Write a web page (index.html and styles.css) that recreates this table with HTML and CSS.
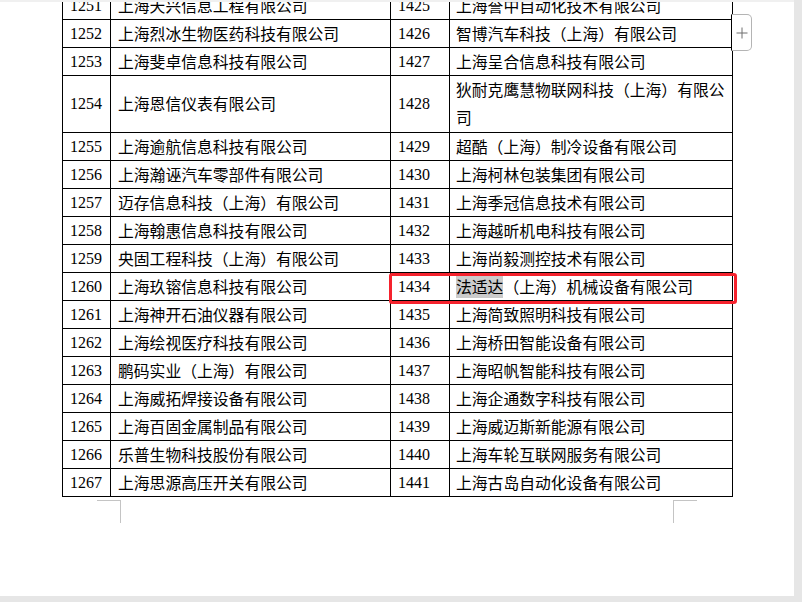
FILE: index.html
```html
<!DOCTYPE html>
<html lang="zh-CN">
<head>
<meta charset="utf-8">
<title>名单</title>
<link rel="stylesheet" href="styles.css">
</head>
<body>
<div class="shell">
  <div class="page">
    <div class="topstrip"></div>
    <div class="sheet">
      <table class="list">
        <colgroup><col class="c-num"><col class="c-name"><col class="c-num2"><col class="c-name2"></colgroup>
        <tr><td class="num">1251</td><td class="name">上海天兴信息工程有限公司</td><td class="num">1425</td><td class="name">上海誉中自动化技术有限公司</td></tr>
        <tr><td class="num">1252</td><td class="name">上海烈冰生物医药科技有限公司</td><td class="num">1426</td><td class="name">智博汽车科技（上海）有限公司</td></tr>
        <tr><td class="num">1253</td><td class="name">上海斐卓信息科技有限公司</td><td class="num">1427</td><td class="name">上海呈合信息科技有限公司</td></tr>
        <tr class="tall"><td class="num">1254</td><td class="name">上海恩信仪表有限公司</td><td class="num">1428</td><td class="name">狄耐克鹰慧物联网科技（上海）有限公司</td></tr>
        <tr><td class="num">1255</td><td class="name">上海逾航信息科技有限公司</td><td class="num">1429</td><td class="name">超酷（上海）制冷设备有限公司</td></tr>
        <tr><td class="num">1256</td><td class="name">上海瀚诬汽车零部件有限公司</td><td class="num">1430</td><td class="name">上海柯林包装集团有限公司</td></tr>
        <tr><td class="num">1257</td><td class="name">迈存信息科技（上海）有限公司</td><td class="num">1431</td><td class="name">上海季冠信息技术有限公司</td></tr>
        <tr><td class="num">1258</td><td class="name">上海翰惠信息科技有限公司</td><td class="num">1432</td><td class="name">上海越昕机电科技有限公司</td></tr>
        <tr><td class="num">1259</td><td class="name">央固工程科技（上海）有限公司</td><td class="num">1433</td><td class="name">上海尚毅测控技术有限公司</td></tr>
        <tr><td class="num">1260</td><td class="name">上海玖镕信息科技有限公司</td><td class="num">1434</td><td class="name"><span class="hl">法适达</span>（上海）机械设备有限公司</td></tr>
        <tr><td class="num">1261</td><td class="name">上海神开石油仪器有限公司</td><td class="num">1435</td><td class="name">上海简致照明科技有限公司</td></tr>
        <tr><td class="num">1262</td><td class="name">上海绘视医疗科技有限公司</td><td class="num">1436</td><td class="name">上海桥田智能设备有限公司</td></tr>
        <tr><td class="num">1263</td><td class="name">鹏码实业（上海）有限公司</td><td class="num">1437</td><td class="name">上海昭帆智能科技有限公司</td></tr>
        <tr><td class="num">1264</td><td class="name">上海威拓焊接设备有限公司</td><td class="num">1438</td><td class="name">上海企通数字科技有限公司</td></tr>
        <tr><td class="num">1265</td><td class="name">上海百固金属制品有限公司</td><td class="num">1439</td><td class="name">上海威迈斯新能源有限公司</td></tr>
        <tr><td class="num">1266</td><td class="name">乐普生物科技股份有限公司</td><td class="num">1440</td><td class="name">上海车轮互联网服务有限公司</td></tr>
        <tr><td class="num">1267</td><td class="name">上海思源高压开关有限公司</td><td class="num">1441</td><td class="name">上海古岛自动化设备有限公司</td></tr>
      </table>
      <div class="marks">
        <div class="mark mark-left"></div>
        <div class="mark mark-right"></div>
      </div>
    </div>
    <div class="redbox"></div>
    <div class="addbtn">
      <svg width="12" height="12" viewBox="0 0 12 12"><path d="M6 0.5V11.5M0.5 6H11.5" stroke="#6e6e6e" stroke-width="1" fill="none"/></svg>
    </div>
  </div>
  <div class="sidestrip"></div>
</div>
</body>
</html>
```

FILE: styles.css
```css
html, body {
  margin: 0;
  padding: 0;
  background: #e6e6e6;
  width: 802px;
  height: 602px;
  overflow: hidden;
}
.shell {
  display: flex;
  width: 802px;
  height: 602px;
}
.page {
  position: relative;
  width: 794px;
  height: 596px;
  background: #ffffff;
  overflow: hidden;
  flex: none;
}
.topstrip {
  height: 2px;
  background: #f0f0f0;
  position: relative;
  z-index: 2;
}
.sidestrip {
  flex: 1;
  background: #e6e6e6;
}
.sheet {
  padding-left: 62px;
  margin-top: -11px;
}
.list {
  border-collapse: collapse;
  table-layout: fixed;
  width: 670px;
  color: #000;
}
.c-num { width: 48px; }
.c-name { width: 280px; }
.c-num2 { width: 59px; }
.c-name2 { width: 283px; }
.list td {
  border: 1px solid #000;
  height: 27px;
  line-height: 27px;
  padding: 0;
  vertical-align: middle;
}
.num {
  font-family: "Liberation Serif", "Times New Roman", serif;
  font-size: 16px;
  padding-left: 7px !important;
}
.name {
  font-family: "Noto Sans CJK SC", "Microsoft YaHei", sans-serif;
  font-size: 15.8px;
  padding-left: 7px !important;
  padding-right: 0 !important;
}
.list td.name:last-child {
  padding-left: 6px !important;
}
.tall td {
  height: 55px;
  line-height: 28px;
}
.hl {
  background: #cbcbcb;
}
.marks {
  display: flex;
  justify-content: space-between;
  padding-top: 3px;
  width: 600px;
  padding-left: 35px;
}
.mark {
  width: 23px;
  height: 22px;
  border-top: 1px solid #c4c4c4;
}
.mark-left {
  border-right: 1px solid #c4c4c4;
}
.mark-right {
  border-left: 1px solid #c4c4c4;
}
.redbox {
  position: absolute;
  left: 389px;
  top: 273px;
  width: 342px;
  height: 25px;
  border: 3px solid #f5222d;
  border-radius: 3px;
}
.addbtn {
  position: absolute;
  left: 731px;
  top: 14px;
  width: 19px;
  height: 35px;
  border: 1px solid #b4b4b4;
  border-left: 1px solid #000;
  border-radius: 0 5px 5px 0;
  background: #fff;
  display: flex;
  align-items: center;
  justify-content: center;
}
```
